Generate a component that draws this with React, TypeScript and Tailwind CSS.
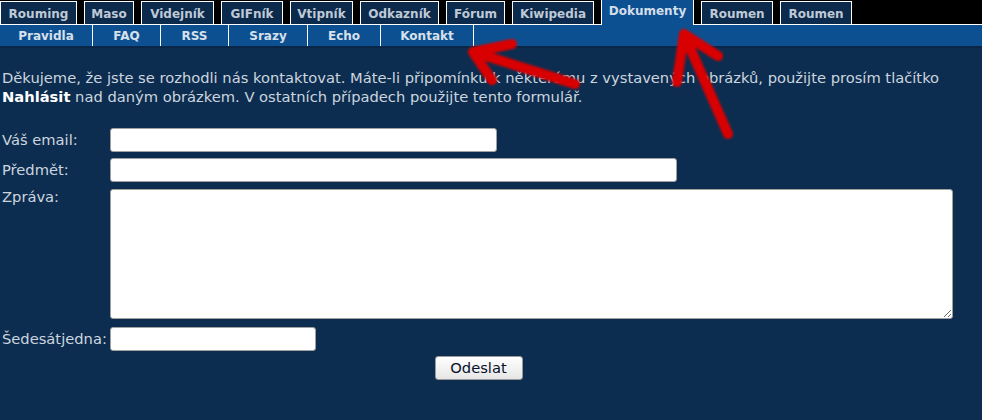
import React from "react";

const tabs: { label: string; w: string; active?: boolean }[] = [
  { label: "Rouming", w: "w-[77px]" },
  { label: "Maso", w: "w-[50px]" },
  { label: "Videjník", w: "w-[73px]" },
  { label: "GIFník", w: "w-[62px]" },
  { label: "Vtipník", w: "w-[63px]" },
  { label: "Odkazník", w: "w-[79px]" },
  { label: "Fórum", w: "w-[59px]" },
  { label: "Kiwipedia", w: "w-[82px]" },
  { label: "Dokumenty", w: "w-[93px]", active: true },
  { label: "Roumen", w: "w-[72px]" },
  { label: "Roumen", w: "w-[72px]" },
];

const subs: { label: string; w: string }[] = [
  { label: "Pravidla", w: "w-[93px]" },
  { label: "FAQ", w: "w-[68px]" },
  { label: "RSS", w: "w-[68px]" },
  { label: "Srazy", w: "w-[79px]" },
  { label: "Echo", w: "w-[73px]" },
  { label: "Kontakt", w: "w-[93px]" },
];

export default function App() {
  return (
    <div
      className="relative w-[982px] h-[420px] overflow-hidden bg-[#0c2d50]"
      style={{ fontFamily: '"DejaVu Sans", Verdana, sans-serif' }}
    >
      {/* Top tabs */}
      <div className="flex items-end gap-[7px] h-[25px] bg-black border-b border-white">
        {tabs.map((t, i) =>
          t.active ? (
            <div
              key={i}
              className={`${t.w} h-[25px] -mb-px relative z-10 flex justify-center pt-[4px] bg-[#0c5091] border-l border-r border-white text-[12px] font-bold text-[#d4deea] leading-[14px]`}
            >
              {t.label}
            </div>
          ) : (
            <div
              key={i}
              className={`${t.w} h-[23px] flex items-center justify-center bg-[#0c2a4c] border border-b-0 border-white text-[12px] font-bold text-[#bfc9d6] leading-[14px] pt-[2px]`}
            >
              {t.label}
            </div>
          )
        )}
      </div>

      {/* Sub nav */}
      <div className="flex h-[21px] bg-[#0c5091] border-b-2 border-[#0a2646] box-content">
        {subs.map((s, i) => (
          <div
            key={i}
            className={`${s.w} h-full flex items-center justify-center border-r border-white text-[12px] font-bold text-[#d8e0ec] leading-[14px]`}
          >
            {s.label}
          </div>
        ))}
      </div>

      {/* Content */}
      <div className="pl-[2px] text-[14.7px] text-[#ccd5df]">
        <p className="mt-[20px] leading-[19px]">
          Děkujeme, že jste se rozhodli nás kontaktovat. Máte-li připomínku k některému z vystavených obrázků, použijte prosím tlačítko{" "}
          <b className="text-white font-bold">Nahlásit</b> nad daným obrázkem. V ostatních případech použijte tento formulář.
        </p>

        <form className="mt-[22px] w-[953px] grid grid-cols-[108px_1fr] leading-[18px]" onSubmit={(e) => e.preventDefault()}>
          <label className="flex items-center h-[24px]">Váš email:</label>
          <input type="text" className="w-[387px] h-[24px] bg-white border border-[#a0a0a0] rounded-[3px]" />

          <label className="flex items-center h-[24px] mt-[6px]">Předmět:</label>
          <input type="text" className="mt-[6px] w-[567px] h-[24px] bg-white border border-[#a0a0a0] rounded-[3px]" />

          <label className="mt-[6px]">Zpráva:</label>
          <textarea className="mt-[7px] w-[843px] h-[130px] bg-white border border-[#a0a0a0] rounded-[3px] resize" />

          <label className="flex items-center h-[24px] mt-[8px] whitespace-nowrap">Šedesátjedna:</label>
          <input type="text" className="mt-[8px] w-[206px] h-[24px] bg-white border border-[#a0a0a0] rounded-[3px]" />

          <div className="col-span-2 flex justify-center mt-[5px]">
            <button
              type="submit"
              className="w-[88px] h-[24px] rounded-[3px] border border-[#9a9a9a] bg-gradient-to-b from-white to-[#e6e6e6] text-[14.7px] text-[#0a0f2a] leading-[18px]"
            >
              Odeslat
            </button>
          </div>
        </form>
      </div>

      {/* Red arrows overlay */}
      <svg
        className="absolute inset-0 pointer-events-none"
        width="982"
        height="420"
        viewBox="0 0 982 420"
      >
        <defs>
          <filter id="soft" x="-10%" y="-10%" width="120%" height="120%">
            <feGaussianBlur stdDeviation="1.3" />
          </filter>
        </defs>
        <g
          stroke="#d80000"
          strokeWidth="10"
          strokeLinecap="round"
          strokeLinejoin="round"
          fill="none"
          filter="url(#soft)"
        >
          <path d="M575 84 L473 52 M512 44 L473 52 L492 80" />
          <path d="M728 134 L684 34 M718 56 L684 34 L677 82" />
        </g>
      </svg>
    </div>
  );
}
